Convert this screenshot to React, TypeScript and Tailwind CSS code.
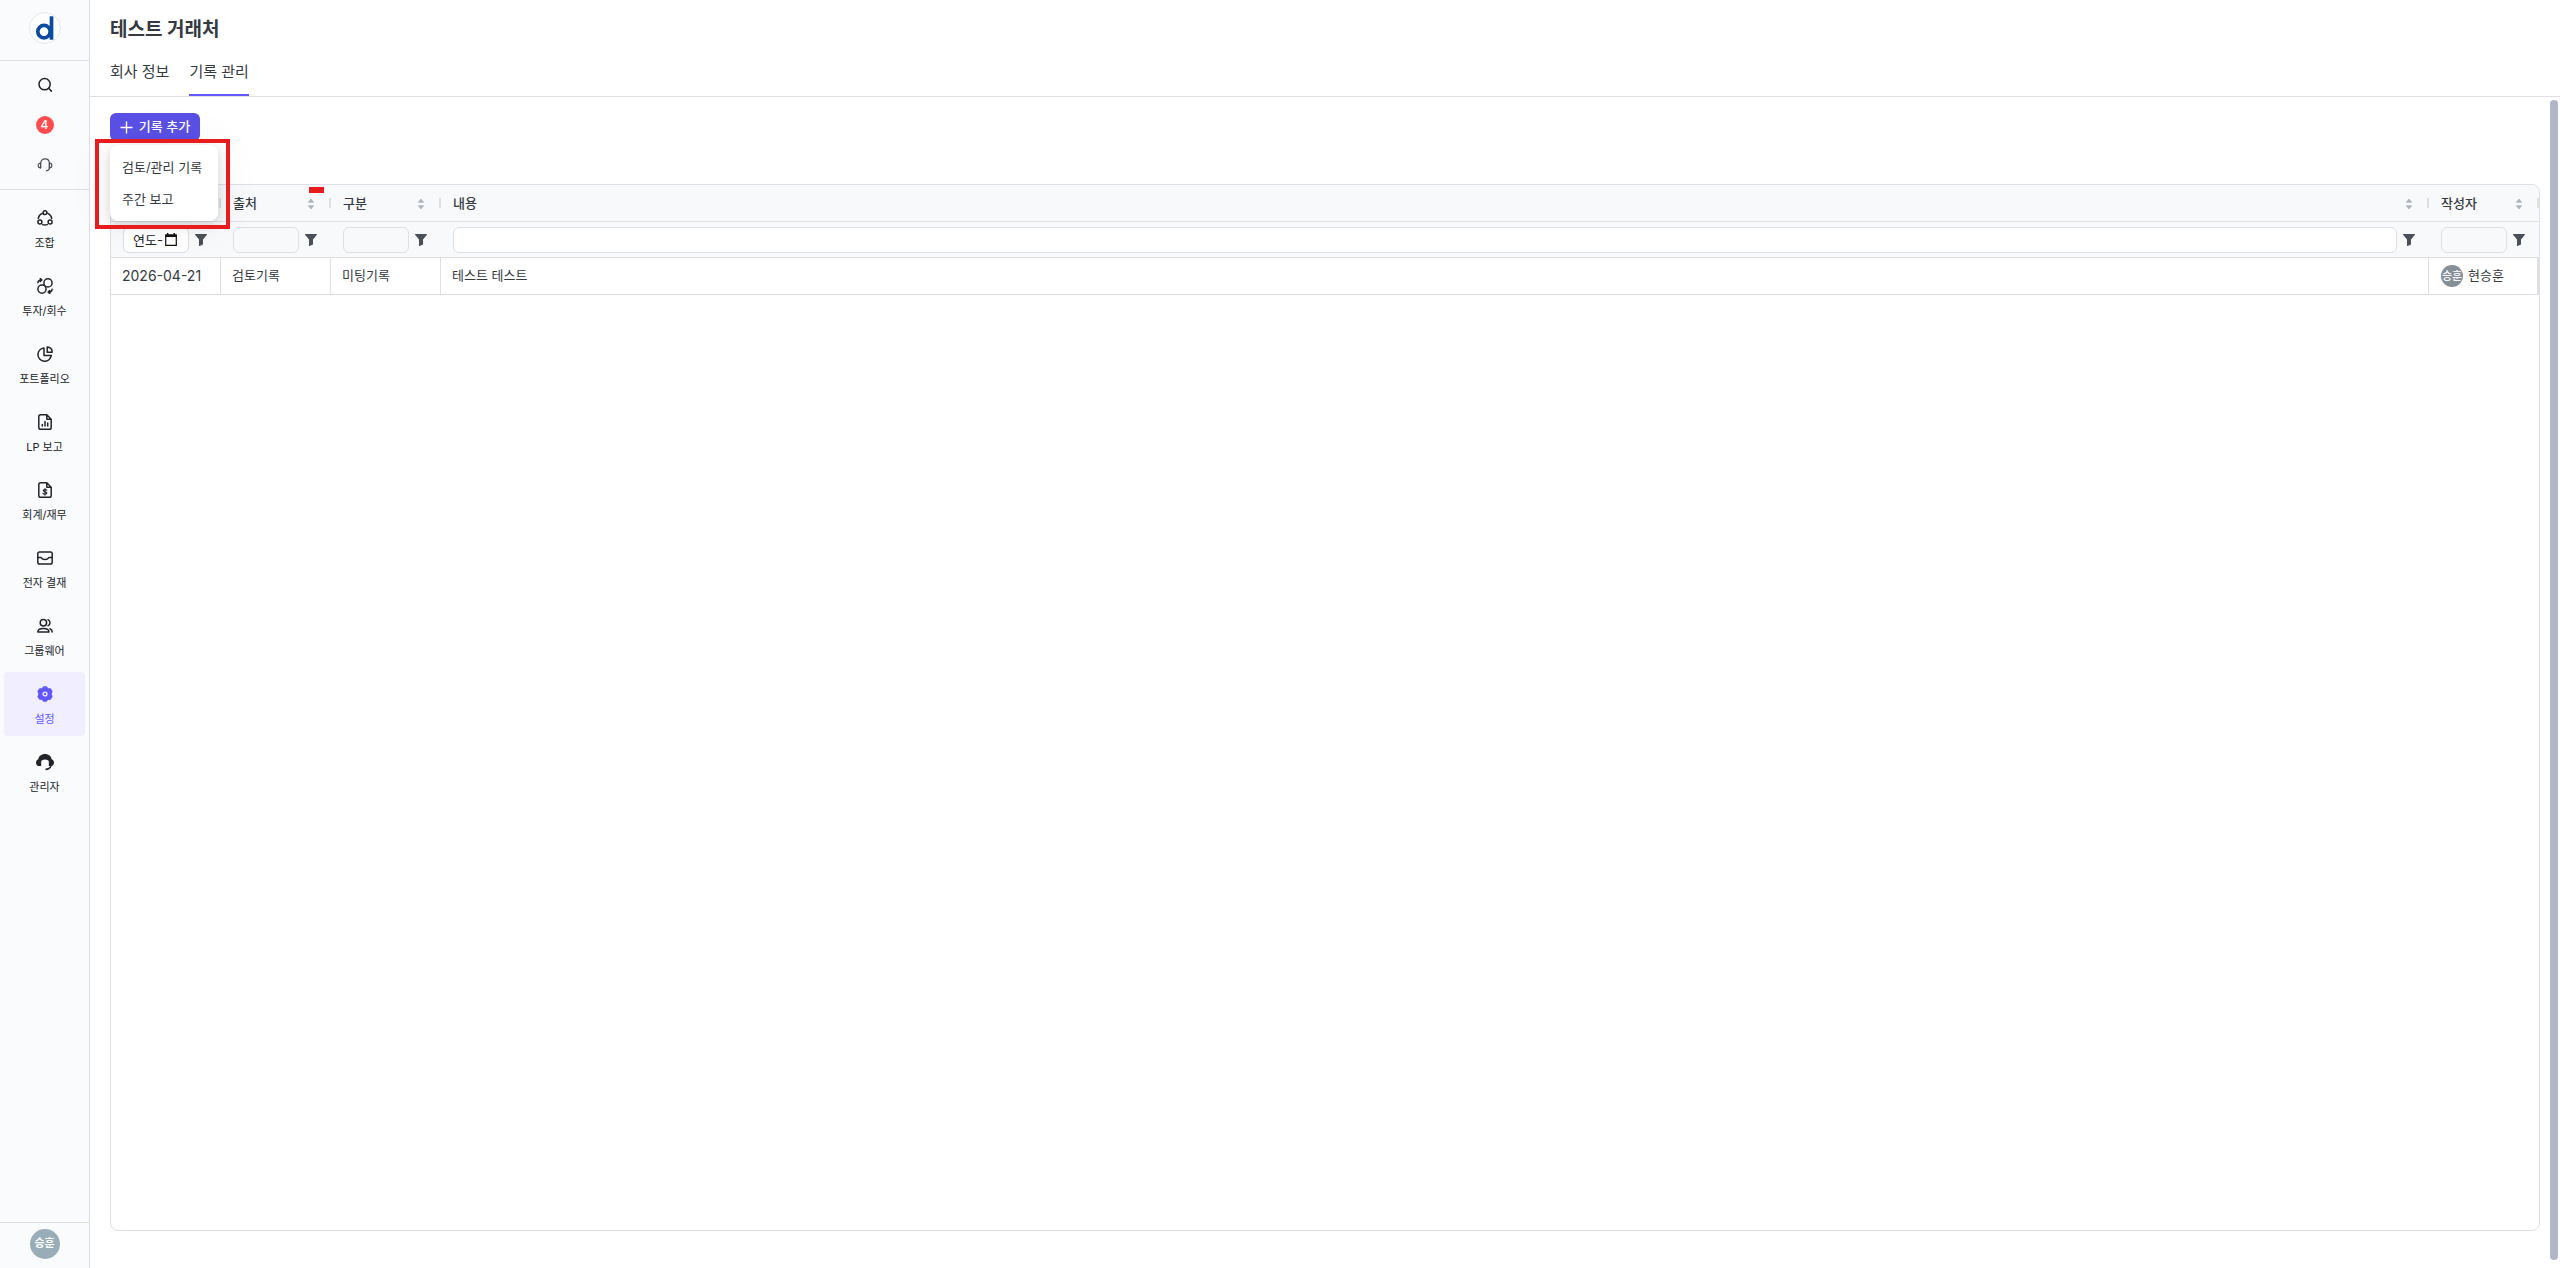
import { ReactNode } from "react";
import clsx from "clsx";

interface NavItem {
  label: string;
  icon: ReactNode;
  active?: boolean;
}

interface Column {
  key: string;
  title: string;
  name: string;
  filter: "date" | "disabled" | "text";
}

const GRID = "grid grid-cols-[110px_110px_110px_minmax(0,1fr)_110px]";

const Line = ({ children }: { children: ReactNode }) => (
  <svg
    width="16"
    height="16"
    viewBox="0 0 16 16"
    fill="none"
    stroke="currentColor"
    strokeWidth="1.5"
    strokeLinecap="round"
    strokeLinejoin="round"
    aria-hidden="true"
  >
    {children}
  </svg>
);

const Logo = () => (
  <svg width="32" height="32" viewBox="0 0 32 32" aria-hidden="true">
    <circle cx="16" cy="16" r="15.5" fill="#fff" stroke="#e4e7eb" />
    <circle cx="15" cy="19.6" r="6.2" fill="none" stroke="#0a4a9f" strokeWidth="3.7" />
    <path d="M22.500 4.300v23.400" stroke="#0a4a9f" strokeWidth="3.700" />
  </svg>
);

const SearchIcon = () => (
  <Line>
    <circle cx="7.6" cy="7.2" r="5.600" />
    <path d="M11.600 11.300l2.800 2.800" />
  </Line>
);

const HeadsetIcon = () => (
  <Line>
    <path d="M3.600 10.800V6.400C3.600 3.600 5.400 1.800 8 1.800s4.400 1.800 4.400 4.600v4.400" strokeWidth="1.200" />
    <path
      d="M3.600 6.200C2 6.200 1.200 7.200 1.200 8.500s.8 2.300 2.400 2.300zM12.400 6.200c1.600 0 2.400 1 2.400 2.300s-.8 2.300-2.400 2.300z"
      strokeWidth="1.200"
    />
    <path d="M12.400 10.800c0 1.800-1 2.800-3 3" strokeWidth="1.200" />
  </Line>
);

const FundIcon = () => (
  <Line>
    <circle cx="8" cy="2.700" r="1.900" />
    <circle cx="2.900" cy="12" r="2" />
    <circle cx="13.100" cy="12" r="2" />
    <path d="M5.200 3.400C3 4.400 1.600 6.200 1.300 8.400M10.800 3.400c2.200 1 3.600 2.800 3.900 5M5.800 14.600c1.500.5 2.900.5 4.400 0" />
  </Line>
);

const InvestIcon = () => (
  <Line>
    <circle cx="11" cy="4.900" r="4.100" />
    <circle cx="5" cy="11.100" r="4.100" />
    <path d="M.9 4.800C1 3 2.200 1.900 4.200 1.900M3.300.6l1.500 1.300-1.500 1.500M15.100 11.200c-.1 1.800-1.300 2.900-3.300 2.900M12.700 12.600l-1.500 1.500 1.500 1.300" />
  </Line>
);

const PieIcon = () => (
  <Line>
    <path d="M7 1.900a6.700 6.700 0 1 0 7.300 7.500H7z" />
    <path d="M10.200.9v5.300h5c0-3-2-5.100-5-5.300z" />
  </Line>
);

const ReportIcon = () => (
  <Line>
    <path d="M9.800.8H3.600c-1 0-1.800.7-1.800 1.800v10.800c0 1 .8 1.800 1.800 1.800h8.800c1 0 1.800-.8 1.800-1.800V5.200zM9.800.8v4.400h4.400" />
    <path d="M5.300 12v-1.600M8 12V7.600M10.700 12V9" />
  </Line>
);

const LedgerIcon = () => (
  <Line>
    <path d="M9.800.8H3.600c-1 0-1.800.7-1.800 1.800v10.800c0 1 .8 1.800 1.800 1.800h8.800c1 0 1.800-.8 1.800-1.800V5.200zM9.800.8v4.400h4.400" />
    <path
      d="M9.800 8.200c-.4-.5-1-.7-1.800-.7-1 0-1.700.4-1.700 1.100 0 1.600 3.500.8 3.500 2.400 0 .7-.8 1.100-1.800 1.100-.8 0-1.500-.3-1.900-.8M8 6.500v6.600"
      strokeWidth="1.200"
    />
  </Line>
);

const InboxIcon = () => (
  <Line>
    <rect x=".8" y="2" width="14.400" height="12" rx="1.800" />
    <path d="M.8 7.600h3.400c.8 1.400 2 2 3.800 2s3-.6 3.800-2h3.400" />
  </Line>
);

const UsersIcon = () => (
  <Line>
    <circle cx="6.400" cy="4.800" r="3.200" />
    <path d="M.8 14c0-2.400 2.200-3.600 5.600-3.600S12 11.600 12 14zM11 1.800c1.300.5 2 1.600 2 3s-.7 2.500-2 3M13 10.800c1.400.6 2.200 1.700 2.200 3.200" />
  </Line>
);

const SettingsIcon = () => (
  <svg width="16" height="16" viewBox="0 0 16 16" aria-hidden="true">
    <path
      d="M6.700 1h2.600l1.200 1.700 2.700.3 1.700 2.300L13.900 8l1 2.700-1.700 2.300-2.700.3L9.300 15H6.700l-1.200-1.700-2.700-.3-1.700-2.300L2.100 8l-1-2.700L2.800 3l2.700-.3z"
      fill="currentColor"
      stroke="currentColor"
      strokeWidth="1.400"
      strokeLinejoin="round"
    />
    <circle cx="8" cy="8" r="1.900" fill="none" stroke="#f0eeff" strokeWidth="1.400" />
  </svg>
);

const AdminIcon = () => (
  <svg width="18" height="18" viewBox="0 0 18 18" className="shrink-0" aria-hidden="true">
    <path
      d="M9 1C5.200 1 2.700 3.300 2.300 6.200 1 6.700 0 8 0 9.700c0 2 1.300 3.400 3.400 3.400h1.800V8.300c.6-1.200 1.700-1.900 3.800-1.900s3.200.7 3.800 1.900v4.800h1.300c-.6 1.400-2 2.200-4.600 2.400v1.700c3.300-.1 5.500-1.700 6.200-4.300 1.400-.5 2.300-1.700 2.300-3.200 0-1.700-1-3-2.300-3.500C15.300 3.300 12.800 1 9 1z"
      fill="currentColor"
    />
  </svg>
);

const SortIcon = () => (
  <svg
    width="8"
    height="12"
    viewBox="0 0 8 12"
    fill="#adb5bd"
    stroke="#adb5bd"
    strokeWidth=".8"
    strokeLinejoin="round"
    aria-hidden="true"
  >
    <path d="M4 1l2.600 3.300H1.400zM4 11L1.400 7.700h5.200z" />
  </svg>
);

const FilterIcon = () => (
  <svg width="12" height="12" viewBox="0 0 12 12" fill="#495057" aria-hidden="true">
    <path d="M.4 0h11.200c.4 0 .5.400.3.700L8 5.600V10.500L4.600 12c-.3.100-.6 0-.6-.4v-6L.1.700C-.1.400 0 0 .4 0z" />
  </svg>
);

const CalendarIcon = () => (
  <svg width="12" height="13" viewBox="0 0 12 13" aria-hidden="true">
    <path d="M.700 2h10.600v10.300H.700z" fill="none" stroke="#111" strokeWidth="1.200" />
    <path d="M.5 1.500h11V4H.5zM2 0h1.400v2H2zM8.600 0H10v2H8.600z" fill="#111" />
  </svg>
);

const navItems: NavItem[] = [
  { label: "조합", icon: <FundIcon /> },
  { label: "투자/회수", icon: <InvestIcon /> },
  { label: "포트폴리오", icon: <PieIcon /> },
  { label: "LP 보고", icon: <ReportIcon /> },
  { label: "회계/재무", icon: <LedgerIcon /> },
  { label: "전자 결재", icon: <InboxIcon /> },
  { label: "그룹웨어", icon: <UsersIcon /> },
  { label: "설정", icon: <SettingsIcon />, active: true },
  { label: "관리자", icon: <AdminIcon /> },
];

const columns: Column[] = [
  { key: "date", title: "", name: "일자", filter: "date" },
  { key: "source", title: "출처", name: "출처", filter: "disabled" },
  { key: "type", title: "구분", name: "구분", filter: "disabled" },
  { key: "content", title: "내용", name: "내용", filter: "text" },
  { key: "author", title: "작성자", name: "작성자", filter: "disabled" },
];

const Sidebar = () => (
  <aside className="flex w-[90px] shrink-0 flex-col border-r border-[#dcdfe5] bg-[#fafbfd] text-[#212529]">
    <a href="#home" aria-label="홈" className="flex h-[61px] items-center justify-center border-b border-[#dcdfe5] pb-1">
      <Logo />
    </a>
    <div className="flex flex-col border-b border-[#dcdfe5] py-1">
      <button aria-label="검색" className="flex h-10 items-center justify-center">
        <SearchIcon />
      </button>
      <button aria-label="알림" className="flex h-10 items-center justify-center">
        <span className="flex size-[18px] items-center justify-center rounded-full bg-[#ff4d4f] text-xs font-medium text-white">
          4
        </span>
      </button>
      <button aria-label="고객 지원" className="flex h-10 items-center justify-center text-[#495057]">
        <HeadsetIcon />
      </button>
    </div>
    <nav className="flex flex-col gap-1 px-1 pt-1.5">
      {navItems.map(({ label, icon, active }) => (
        <a
          key={label}
          href="#nav"
          className={clsx(
            "flex h-16 flex-col items-center gap-2 rounded-sm pt-3.5 text-[11px] leading-[18px]",
            active && "bg-[#f0eeff] text-[#6357ff]"
          )}
        >
          <span className="flex size-4 items-center justify-center">{icon}</span>
          {label}
        </a>
      ))}
    </nav>
    <div className="mt-auto flex h-[46px] items-center justify-center border-t border-[#dcdfe5] pb-1">
      <button className="flex size-[30px] items-center justify-center rounded-full bg-[#98adb8] text-[11px] font-bold whitespace-nowrap text-white">
        승훈
      </button>
    </div>
  </aside>
);

const AddRecordMenu = () => (
  <div className="relative w-fit">
    <button className="flex h-7 w-[90px] items-center justify-center gap-1.5 rounded-md bg-[#5a50e6] text-[13px] font-medium text-white">
      <svg width="13" height="13" viewBox="0 0 13 13" stroke="currentColor" strokeWidth="1.400" aria-hidden="true">
        <path d="M6.500.5v12M.5 6.500h12" />
      </svg>
      기록 추가
    </button>
    <div className="absolute top-8 left-0 z-10 flex w-[108px] flex-col rounded-lg bg-white py-1.5 shadow-[0_4px_12px_rgba(0,0,0,0.15),0_0_50px_rgba(0,0,0,0.06)]">
      <button className="h-8 px-3 pt-0.5 text-left text-[13px]">검토/관리 기록</button>
      <button className="h-8 px-3 pt-0.5 text-left text-[13px]">주간 보고</button>
    </div>
    <div className="pointer-events-none absolute top-[26px] left-[-15px] z-20 h-[90px] w-[135px] border-4 border-[#e81c1c]" />
  </div>
);

const ColumnFilter = ({ column }: { column: Column }) => (
  <div className="flex h-full items-center gap-1.5 pr-3.5 pl-3">
    <div className="relative min-w-0 flex-1">
      <input
        type="text"
        aria-label={`${column.name} 필터`}
        placeholder={column.filter === "date" ? "연도-" : undefined}
        disabled={column.filter === "disabled"}
        className="block h-[26px] w-full rounded-md border border-[#dcdfe5] bg-white px-[9px] text-[13px] placeholder:text-[#212529] disabled:bg-[#f8f9fb]"
      />
      {column.filter === "date" && (
        <span className="absolute top-1.5 right-3">
          <CalendarIcon />
        </span>
      )}
    </div>
    <button aria-label={`${column.name} 필터 적용`}>
      <FilterIcon />
    </button>
  </div>
);

const RecordTable = () => (
  <div className="min-h-0 flex-1 overflow-hidden rounded-lg border border-[#dcdfe5]">
    <table className="block w-full text-[13px] text-[#343a40]">
      <thead className="block bg-[#f8f9fb]">
        <tr className={clsx(GRID, "h-[37px] border-b border-[#dcdfe5]")}>
          {columns.map((column) => (
            <th
              key={column.key}
              aria-label={column.name}
              className="relative flex items-center justify-between pt-0.5 pr-4 pl-3 font-medium"
            >
              {column.title}
              {column.title && <SortIcon />}
              <span className="absolute top-[13px] right-0 h-2.5 w-0.5 bg-[#dcdfe5]" />
              {column.key === "source" && (
                <span className="absolute top-0.5 right-[7px] h-1.5 w-[15px] bg-[#e81c1c]" />
              )}
            </th>
          ))}
        </tr>
        <tr className={clsx(GRID, "h-9 border-b border-[#dcdfe5]")}>
          {columns.map((column) => (
            <td key={column.key} className="block">
              <ColumnFilter column={column} />
            </td>
          ))}
        </tr>
      </thead>
      <tbody className="block">
        <tr className={clsx(GRID, "h-[37px] border-b border-[#dcdfe5]")}>
          <td className="flex items-center border-r border-[#dcdfe5] pl-[11px] text-sm">2026-04-21</td>
          <td className="flex items-center border-r border-[#dcdfe5] pl-[11px]">검토기록</td>
          <td className="flex items-center border-r border-[#dcdfe5] pl-[11px]">미팅기록</td>
          <td className="flex items-center border-r border-[#dcdfe5] pl-[11px]">테스트 테스트</td>
          <td className="flex items-center gap-[5px] border-r-2 border-[#dcdfe5] pl-3">
            <span className="flex size-[22px] items-center justify-center rounded-full bg-[#868e96] text-[11px] font-medium whitespace-nowrap text-white">
              승훈
            </span>
            현승훈
          </td>
        </tr>
      </tbody>
    </table>
  </div>
);

const App = () => (
  <div className="flex h-screen bg-white font-[Inter,'Noto_Sans_CJK_KR',sans-serif] text-[#343a40]">
    <Sidebar />
    <main className="flex min-w-0 flex-1 flex-col">
      <header className="border-b border-[#dcdfe5] px-5">
        <h1 className="flex h-[60px] items-center text-[19px] font-bold">테스트 거래처</h1>
        <nav className="flex h-9 gap-5 text-[15px]">
          <a href="#info" className="flex pt-px">
            회사 정보
          </a>
          <a href="#records" className="flex border-b-2 border-[#6357ff] pt-px">
            기록 관리
          </a>
        </nav>
      </header>
      <div className="flex min-h-0 flex-1">
        <section className="flex min-w-0 flex-1 flex-col gap-[43px] pt-4 pr-2.5 pb-[37px] pl-5">
          <AddRecordMenu />
          <RecordTable />
        </section>
        <div className="mt-[3px] mr-0.5 mb-2 w-2 rounded-full bg-[#b0b7c5]" />
      </div>
    </main>
  </div>
);

export default App;
